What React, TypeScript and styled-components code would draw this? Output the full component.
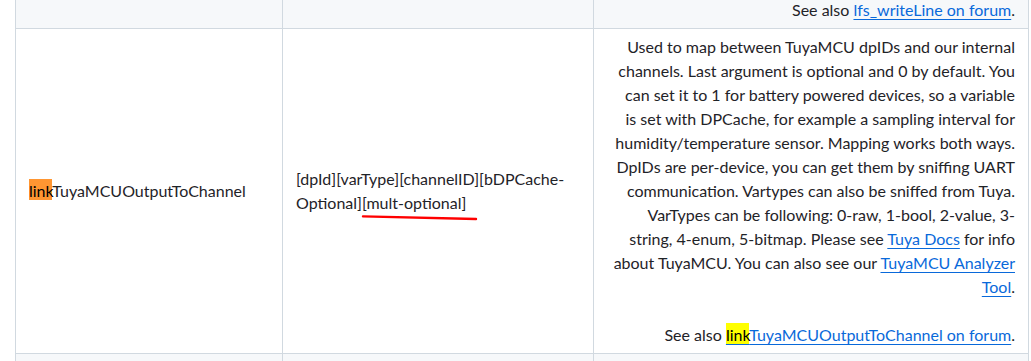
import React from "react";
import styled, { createGlobalStyle } from "styled-components";

const GlobalStyle = createGlobalStyle`
  html, body {
    margin: 0;
    padding: 0;
    background: #ffffff;
  }
  body {
    font-family: Lato, "Liberation Sans", Arial, sans-serif;
    color: #1f2328;
  }
`;

const Viewport = styled.div`
  width: 1031px;
  height: 361px;
  overflow: hidden;
`;

const Table = styled.table`
  border-collapse: collapse;
  table-layout: fixed;
  width: 1013px;
  margin: -9px 0 0 15px;
  font-size: 16px;
  line-height: 24px;
`;

const Row = styled.tr<{ $striped?: boolean }>`
  background: ${(p) => (p.$striped ? "#f6f8fa" : "#ffffff")};
`;

const Cell = styled.td<{ $align?: "left" | "right" }>`
  padding: 6px 13px;
  border: 1px solid #d1d9e0;
  vertical-align: middle;
  text-align: ${(p) => p.$align ?? "left"};
  color: #1f2328;
`;

const Link = styled.a`
  color: #0969da;
  text-decoration: underline;
  text-underline-offset: 0.2rem;
`;

const Match = styled.mark<{ $active?: boolean }>`
  background: ${(p) => (p.$active ? "#ff9632" : "#ffff00")};
  color: #000000;
  padding: 2px 0 0;
`;

const Annotated = styled.span`
  position: relative;
`;

const Scribble = styled.svg`
  position: absolute;
  left: 0;
  top: 22px;
  width: 116px;
  height: 8px;
  overflow: visible;
  pointer-events: none;
`;

export default function App() {
  return (
    <>
      <GlobalStyle />
      <Viewport>
        <Table>
          <colgroup>
            <col style={{ width: 267 }} />
            <col style={{ width: 311 }} />
            <col style={{ width: 435 }} />
          </colgroup>
          <tbody>
            <Row $striped>
              <Cell />
              <Cell />
              <Cell $align="right">
                See also <Link href="#">lfs_writeLine on forum</Link>.
              </Cell>
            </Row>
            <Row>
              <Cell>
                <Match $active>link</Match>TuyaMCUOutputToChannel
              </Cell>
              <Cell>
                [dpId][varType][channelID][bDPCache-Optional]
                <Annotated>
                  [mult-optional]
                  <Scribble viewBox="0 0 116 8">
                    <path
                      d="M1 1.4 C 30 2, 70 3, 114 4"
                      stroke="#ff0000"
                      strokeWidth="2.4"
                      fill="none"
                      strokeLinecap="round"
                    />
                  </Scribble>
                </Annotated>
              </Cell>
              <Cell $align="right">
                Used to map between TuyaMCU dpIDs and our internal
                <br />
                channels. Last argument is optional and 0 by default. You
                <br />
                can set it to 1 for battery powered devices, so a variable
                <br />
                is set with DPCache, for example a sampling interval for
                <br />
                humidity/temperature sensor. Mapping works both ways.
                <br />
                DpIDs are per-device, you can get them by sniffing UART
                <br />
                communication. Vartypes can also be sniffed from Tuya.
                <br />
                VarTypes can be following: 0-raw, 1-bool, 2-value, 3-
                <br />
                string, 4-enum, 5-bitmap. Please see{" "}
                <Link href="#">Tuya Docs</Link> for info
                <br />
                about TuyaMCU. You can also see our{" "}
                <Link href="#">
                  TuyaMCU Analyzer
                  <br />
                  Tool
                </Link>
                .
                <br />
                <br />
                See also{" "}
                <Link href="#">
                  <Match>link</Match>TuyaMCUOutputToChannel on forum
                </Link>
                .
              </Cell>
            </Row>
            <Row $striped>
              <Cell>&nbsp;</Cell>
              <Cell />
              <Cell />
            </Row>
          </tbody>
        </Table>
      </Viewport>
    </>
  );
}
